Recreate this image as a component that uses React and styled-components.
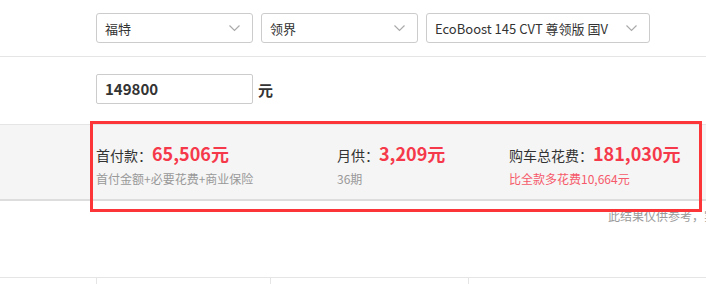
import styled, { createGlobalStyle } from "styled-components";

const GlobalStyle = createGlobalStyle`
  html, body {
    margin: 0;
    padding: 0;
    background: #fff;
    overflow: hidden;
  }
  body {
    font-family: "Microsoft YaHei", "Noto Sans CJK SC", "Noto Sans", sans-serif;
    color: #333;
  }
`;

const Page = styled.div`
  position: relative;
  width: 706px;
  height: 284px;
  overflow: hidden;
`;

const SelectRow = styled.div`
  display: flex;
  gap: 8px;
  height: 57px;
  box-sizing: border-box;
  padding: 13px 0 0 96px;
  border-bottom: 1px solid #e5e5e5;
`;

const Select = styled.div`
  display: flex;
  align-items: center;
  justify-content: space-between;
  box-sizing: border-box;
  width: ${(props) => props.width}px;
  height: 30px;
  padding: 0 12px 0 8px;
  border: 1px solid #ccc;
  border-radius: 3px;
  font-size: 13px;
  color: #333;
  white-space: nowrap;
`;

const PriceRow = styled.div`
  display: flex;
  align-items: center;
  height: 67px;
  box-sizing: border-box;
  padding: 17px 0 20px 96px;
`;

const PriceInput = styled.div`
  box-sizing: border-box;
  width: 157px;
  height: 30px;
  line-height: 28px;
  padding-left: 8px;
  border: 1px solid #ccc;
  border-radius: 2px;
  font-size: 15px;
  font-weight: bold;
  color: #333;
`;

const Unit = styled.span`
  margin-left: 5px;
  font-size: 15px;
  font-weight: bold;
  color: #333;
`;

const Band = styled.div`
  display: grid;
  grid-template-columns: 241px 172px 1fr;
  height: 77px;
  box-sizing: border-box;
  padding: 15px 0 0 96px;
  background: #f5f5f5;
  border-top: 1px solid #e5e5e5;
  border-bottom: 2px solid #ddd;
`;

const Item = styled.div`
  display: flex;
  flex-direction: column;
`;

const MainLine = styled.div`
  display: flex;
  align-items: baseline;
  height: 29px;
  font-size: 14px;
  color: #333;
  white-space: nowrap;
`;

const Amount = styled.span`
  font-size: 18px;
  font-weight: bold;
  color: #f5394b;
`;

const SubLine = styled.div`
  height: 20px;
  line-height: 20px;
  font-size: 12px;
  color: ${(props) => (props.red ? "#f5596a" : "#999")};
  white-space: nowrap;
`;

const Note = styled.div`
  height: 76px;
  box-sizing: border-box;
  padding: 7px 0 0 608px;
  font-size: 12px;
  line-height: 16px;
  color: #999;
  white-space: nowrap;
`;

const TableRow = styled.div`
  display: grid;
  grid-template-columns: 96px 174px 198px 1fr;
  height: 20px;
  border-top: 1px solid #e5e5e5;
`;

const Cell = styled.div`
  border-left: ${(props) => (props.first ? "none" : "1px solid #e5e5e5")};
`;

const Highlight = styled.div`
  position: absolute;
  left: 90px;
  top: 121px;
  width: 612px;
  height: 91px;
  box-sizing: border-box;
  border: 3px solid #fc3538;
  pointer-events: none;
`;

function Chevron() {
  return (
    <svg width="11" height="7" viewBox="0 0 11 7">
      <polyline points="0.5,0.5 5.5,5.5 10.5,0.5" fill="none" stroke="#aaa" strokeWidth="1.2" />
    </svg>
  );
}

export default function App() {
  const selects = [
    { label: "福特", width: 157 },
    { label: "领界", width: 157 },
    { label: "EcoBoost 145 CVT 尊领版 国V", width: 224 },
  ];

  const results = [
    { title: "首付款：", value: "65,506元", sub: "首付金额+必要花费+商业保险" },
    { title: "月供：", value: "3,209元", sub: "36期" },
    { title: "购车总花费：", value: "181,030元", sub: "比全款多花费10,664元", red: true },
  ];

  return (
    <Page>
      <GlobalStyle />
      <SelectRow>
        {selects.map((s) => (
          <Select key={s.label} width={s.width}>
            <span>{s.label}</span>
            <Chevron />
          </Select>
        ))}
      </SelectRow>
      <PriceRow>
        <PriceInput>149800</PriceInput>
        <Unit>元</Unit>
      </PriceRow>
      <Band>
        {results.map((r) => (
          <Item key={r.title}>
            <MainLine>
              {r.title}
              <Amount>{r.value}</Amount>
            </MainLine>
            <SubLine red={r.red}>{r.sub}</SubLine>
          </Item>
        ))}
      </Band>
      <Note>此结果仅供参考，实际应缴费以当地为准</Note>
      <TableRow>
        <Cell first />
        <Cell />
        <Cell />
        <Cell />
      </TableRow>
      <Highlight />
    </Page>
  );
}
